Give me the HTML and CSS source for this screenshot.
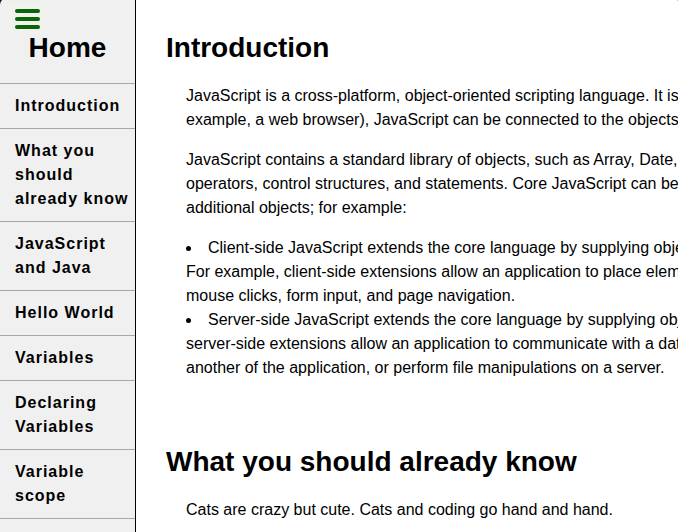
FILE: index.html
```html
<!DOCTYPE html>
<html lang="en">
<head>
<meta charset="utf-8">
<title>JavaScript Introduction</title>
<link rel="stylesheet" href="styles.css">
</head>
<body>
<div class="page">
  <nav class="sidebar" aria-label="Sections">
    <button class="menu-button" type="button" aria-label="Menu">
      <svg width="25" height="20" viewBox="0 0 25 20" aria-hidden="true">
        <rect width="25" height="4" rx="2"/>
        <rect y="8" width="25" height="4" rx="2"/>
        <rect y="16" width="25" height="4" rx="2"/>
      </svg>
    </button>
    <h1 class="heading sidebar-title">Home</h1>
    <ul class="nav-list">
      <li><a href="#introduction">Introduction</a></li>
      <li><a href="#know">What you should already know</a></li>
      <li><a href="#java">JavaScript and Java</a></li>
      <li><a href="#hello">Hello World</a></li>
      <li><a href="#variables">Variables</a></li>
      <li><a href="#declaring">Declaring Variables</a></li>
      <li><a href="#scope">Variable scope</a></li>
      <li></li>
    </ul>
  </nav>
  <main class="content">
    <section class="section" id="introduction">
      <h1 class="heading">Introduction</h1>
      <div class="text">
        <p>JavaScript is a cross-platform, object-oriented scripting language. It is<br>
          example, a web browser), JavaScript can be connected to the objects</p>
        <p>JavaScript contains a standard library of objects, such as Array, Date,<br>
          operators, control structures, and statements. Core JavaScript can be<br>
          additional objects; for example:</p>
        <ul class="bullets">
          <li>Client-side JavaScript extends the core language by supplying objects<br>
            For example, client-side extensions allow an application to place elements<br>
            mouse clicks, form input, and page navigation.</li>
          <li>Server-side JavaScript extends the core language by supplying objects<br>
            server-side extensions allow an application to communicate with a database<br>
            another of the application, or perform file manipulations on a server.</li>
        </ul>
      </div>
    </section>
    <section class="section" id="know">
      <h1 class="heading">What you should already know</h1>
      <div class="text">
        <p>Cats are crazy but cute. Cats and coding go hand and hand.</p>
      </div>
    </section>
  </main>
</div>
</body>
</html>
```
FILE: styles.css
```css
* {
  box-sizing: border-box;
}

html {
  background: #1c1c1c;
}

body {
  margin: 0;
  font-family: "Liberation Sans", Arial, sans-serif;
  font-size: 16px;
  line-height: 24px;
  color: #000;
}

.page {
  display: grid;
  grid-template-columns: 136px minmax(0, 1fr);
  height: 100vh;
  overflow: hidden;
  background: #fff;
  border-radius: 3px 1px 0 0 / 8px 1px 0 0;
}

.sidebar {
  position: relative;
  padding-top: 32px;
  overflow: hidden;
  background: #f0f0f0;
  border-right: 1px solid #000;
}

.menu-button {
  position: absolute;
  top: 4px;
  left: 8px;
  display: flex;
  padding: 5px 7px;
  border: 0;
  background: #f1f2ee;
  cursor: pointer;
}

.menu-button svg {
  fill: #0a640a;
}

.heading {
  margin: 0;
  font-size: 28px;
  line-height: 32px;
  font-weight: bold;
}

.sidebar-title {
  position: relative;
  text-align: center;
}

.nav-list {
  margin: 19px 0 0;
  padding: 0;
  list-style: none;
}

.nav-list li {
  padding: 10px 0 10px 15px;
  border-top: 1px solid #a5a8ab;
}

.nav-list a {
  display: block;
  color: #000;
  font-weight: bold;
  letter-spacing: 1px;
  text-decoration: none;
}

.content {
  padding: 32px 0 0 30px;
  overflow: hidden;
}

.section {
  margin-bottom: 66px;
}

.text {
  margin-top: 20px;
  padding-left: 20px;
  white-space: nowrap;
}

.text p {
  margin: 0 0 16px;
}

.bullets {
  margin: 0;
  padding: 0;
  list-style: disc inside;
}
```
